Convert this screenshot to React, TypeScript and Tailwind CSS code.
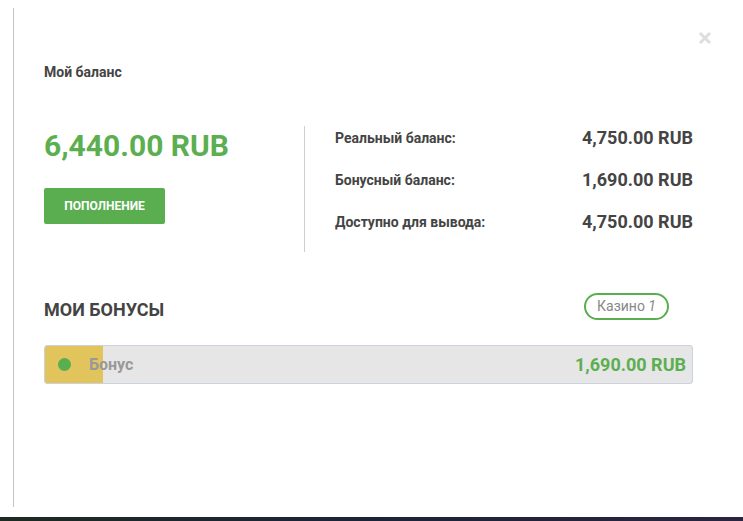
import React from "react";

export default function App() {
  return (
    <div className="w-[743px] h-[521px] bg-white flex flex-col overflow-hidden" style={{ fontFamily: "Roboto, 'Liberation Sans', sans-serif" }}>
      <div className="relative h-[517px] flex">
        <div className="w-[13px] shrink-0" />
        <div className="mt-[8px] h-[499px] w-px bg-[#c4c4c4] shrink-0" />
        <div className="flex-1 pl-[30px] pr-[50px]">
          <div className="pt-[64px] text-[14px] font-bold text-[#444] leading-[16px]">Мой баланс</div>
          <div className="mt-[46px] flex">
            <div className="w-[260px] pt-[3px]">
              <div className="text-[30px] font-bold text-[#5caf50] leading-[34px]">6,440.00 RUB</div>
              <button className="mt-[25px] w-[121px] h-[36px] rounded-[2px] bg-[#5aae50] text-white text-[12px] font-bold flex items-center justify-center">ПОПОЛНЕНИЕ</button>
            </div>
            <div className="w-px h-[126px] bg-[#cfcfcf]" />
            <div className="flex-1 pl-[30px] pt-[1px] flex flex-col gap-[21px]">
              {[
                ["Реальный баланс:", "4,750.00 RUB"],
                ["Бонусный баланс:", "1,690.00 RUB"],
                ["Доступно для вывода:", "4,750.00 RUB"],
              ].map(([l, v]) => (
                <div key={l} className="flex justify-between items-center h-[21px]">
                  <span className="text-[14px] font-bold text-[#444] mt-[2px]">{l}</span>
                  <span className="text-[18px] font-bold text-[#444]">{v}</span>
                </div>
              ))}
            </div>
          </div>
          <div className="mt-[41px] flex items-center justify-between pr-[24px]">
            <span className="text-[18px] font-bold text-[#444]">МОИ БОНУСЫ</span>
            <span className="mb-[5px] h-[27px] px-[11px] rounded-full border-2 border-[#5aae50] text-[14px] text-[#888] flex items-center">
              Казино&nbsp;<i>1</i>
            </span>
          </div>
          <div className="mt-[20px] h-[39px] rounded-[3px] border border-[#c9d2de] bg-[#e6e6e6] flex items-center overflow-hidden relative">
            <div className="absolute left-0 top-0 bottom-0 w-[58px] bg-[#e2c45c]" />
            <div className="relative ml-[13px] w-[13px] h-[13px] rounded-full bg-[#5aae50]" />
            <span className="relative ml-[18px] text-[16px] font-bold text-[#999]">Бонус</span>
            <span className="relative ml-auto mr-[6px] text-[18px] font-bold text-[#5caf50]">1,690.00 RUB</span>
          </div>
        </div>
        <div className="absolute left-[698px] top-[31px] text-[#dedede]">
          <svg width="14" height="14" viewBox="0 0 14 14">
            <path d="M2 2 L12 12 M12 2 L2 12" stroke="currentColor" strokeWidth="3" />
          </svg>
        </div>
      </div>
      <div className="h-[4px] bg-gradient-to-r from-[#1e2a22] via-[#1c2338] to-[#2a2440]" />
    </div>
  );
}
